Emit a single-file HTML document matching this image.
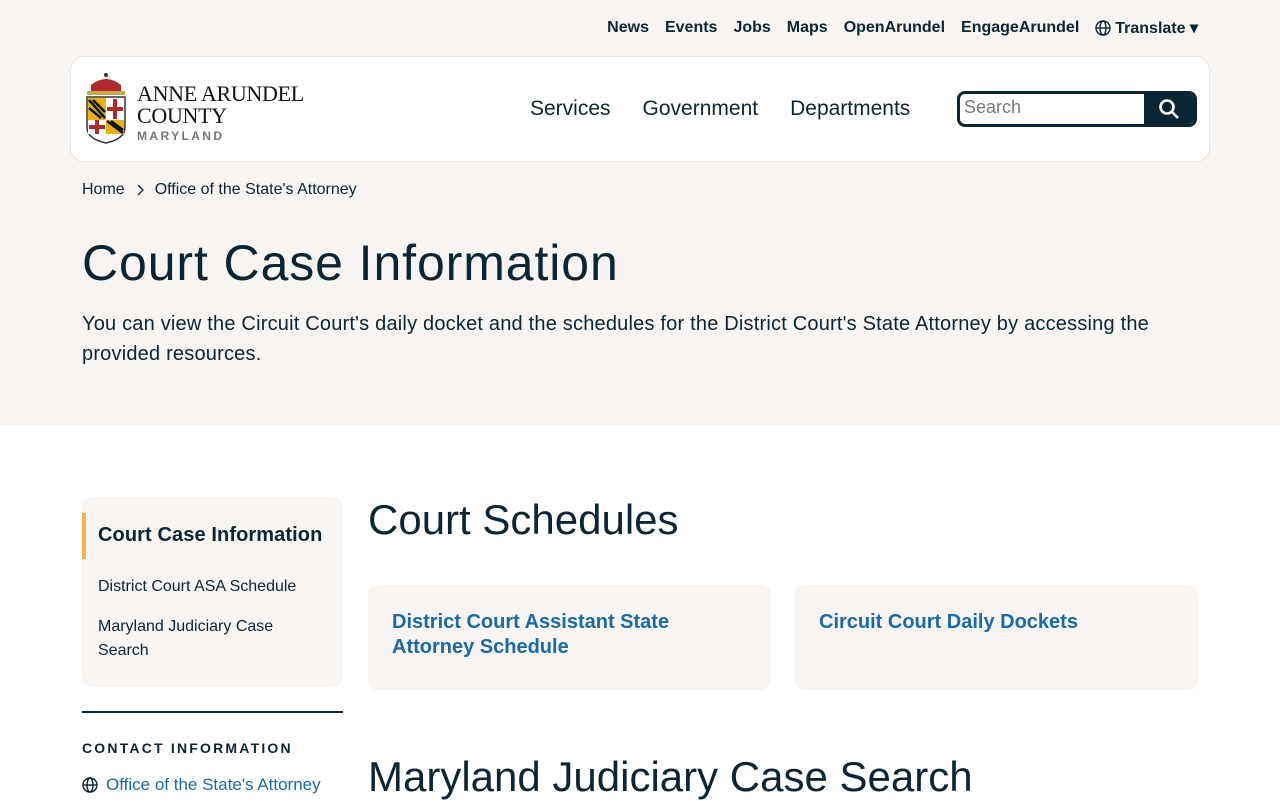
<!DOCTYPE html>
<html><head><meta charset="utf-8"><style>
*{box-sizing:border-box;margin:0;padding:0}
body{width:1280px;height:800px;overflow:hidden;font-family:"Liberation Sans",sans-serif;color:#0b2535;background:#fff}
.top{background:#f7f4f1;height:425px;position:relative}
.util{position:absolute;top:18px;right:82px;display:flex;gap:16px;font-size:16px;font-weight:600;letter-spacing:0}
.util span{display:flex;align-items:center;gap:4px}
.hdr{position:absolute;left:70px;top:56px;width:1140px;height:106px;background:#fff;border:1px solid #e8e4e0;border-radius:14px}
.logo{position:absolute;left:12px;top:14px;width:46px;height:76px}
.lt{position:absolute;left:66px;top:26px;font-family:"Liberation Serif",serif;font-size:22px;line-height:22px;color:#111;letter-spacing:-.3px}
.lt small{display:block;font-family:"Liberation Sans",sans-serif;font-size:12px;letter-spacing:2.4px;color:#777;font-weight:bold;line-height:16px;margin-top:1px}
.nav{position:absolute;left:459px;top:40px;display:flex;gap:32px;font-size:21px;font-weight:500}
.search{position:absolute;left:886px;top:34px;width:240px;height:36px;border:3px solid #0b2535;border-radius:8px;overflow:hidden;display:flex}
.search div{flex:1;color:#777;font-size:18px;padding:3px 4px}
.search b{width:50px;background:#0b2535;display:flex;align-items:center;justify-content:center}
.bc{position:absolute;left:82px;top:181px;font-size:16px;display:flex;gap:10px;align-items:center}
h1{position:absolute;left:82px;top:234px;font-size:50px;font-weight:500;letter-spacing:.9px}
.intro{position:absolute;left:82px;top:309px;width:1110px;font-size:20px;line-height:30px;letter-spacing:.2px}
.side{position:absolute;left:82px;top:497px;width:261px;height:190px;background:#f7f4f1;border-radius:10px}
.side .act{position:absolute;left:0;top:16px;height:46px;border-left:4px solid #f7b34a;padding:11px 0 0 12px;font-size:20px;font-weight:bold;letter-spacing:.1px}
.side p{position:absolute;left:16px;font-size:16px;line-height:24px}
.hr{position:absolute;left:82px;top:711px;width:261px;border-top:2px solid #0b2535}
.ci{position:absolute;left:82px;top:740px;font-size:14px;font-weight:bold;letter-spacing:2.2px}
.ol{position:absolute;left:82px;top:775px;font-size:17px;color:#1a69a8;display:flex;gap:8px;align-items:center}
h2{position:absolute;left:368px;font-size:42px;font-weight:500;letter-spacing:0}
.card{position:absolute;top:585px;width:403px;height:105px;background:#f7f4f1;border-radius:10px;padding:25px 24px;font-size:20px;font-weight:600;color:#1a69a8;line-height:25px}
</style></head><body>
<div class="top">
<div class="util"><span>News</span><span>Events</span><span>Jobs</span><span>Maps</span><span>OpenArundel</span><span>EngageArundel</span><span><svg width="16" height="16" viewBox="0 0 16 16" fill="none" stroke="#0b2535" stroke-width="1.4"><circle cx="8" cy="8" r="7"/><ellipse cx="8" cy="8" rx="3" ry="7"/><path d="M1 8h14"/></svg>Translate ▾</span></div>
<div class="hdr">
<svg class="logo" viewBox="0 0 46 76"><path d="M8 14q15-12 30 0v6H8z" fill="#b02a2a"/><circle cx="23" cy="4" r="2" fill="#333"/><rect x="4" y="20" width="38" height="4" fill="#c8a84b"/><path d="M4 26h38v30q0 12-19 16Q4 68 4 56z" fill="#fff" stroke="#333" stroke-width="1.5"/><rect x="5" y="27" width="18" height="22" fill="#e9b314"/><path d="M6 29l16 18M6 37l12 10M10 29l12 12" stroke="#111" stroke-width="2.5"/><rect x="23" y="27" width="18" height="22" fill="#fff"/><path d="M32 28v20M24 38h16" stroke="#b02a2a" stroke-width="4"/><rect x="5" y="49" width="18" height="14" fill="#fff"/><path d="M14 49v14M6 56h16" stroke="#b02a2a" stroke-width="4"/><rect x="23" y="49" width="18" height="14" fill="#e9b314"/><path d="M24 50l16 12M28 50l12 9" stroke="#111" stroke-width="2.5"/></svg>
<div class="lt">ANNE ARUNDEL<br>COUNTY<small>MARYLAND</small></div>
<div class="nav"><span>Services</span><span>Government</span><span>Departments</span></div>
<div class="search"><div>Search</div><b><svg width="22" height="22" viewBox="0 0 22 22" fill="none" stroke="#fff" stroke-width="2.6"><circle cx="9" cy="9" r="6.5"/><path d="M14 14l6 6"/></svg></b></div>
</div>
<div class="bc"><span>Home</span><svg width="10" height="12" viewBox="0 0 10 12" fill="none" stroke="#0b2535" stroke-width="1.3"><path d="M3 1l5 5-5 5"/></svg><span>Office of the State's Attorney</span></div>
<h1>Court Case Information</h1>
<div class="intro">You can view the Circuit Court's daily docket and the schedules for the District Court's State Attorney by accessing the provided resources.</div>
</div>
<div class="side"><div class="act">Court Case Information</div><p style="top:78px">District Court ASA Schedule</p><p style="top:118px">Maryland Judiciary Case<br>Search</p></div>
<div class="hr"></div>
<div class="ci">CONTACT INFORMATION</div>
<div class="ol"><svg width="16" height="16" viewBox="0 0 16 16" fill="none" stroke="#0b2535" stroke-width="1.4"><circle cx="8" cy="8" r="7"/><ellipse cx="8" cy="8" rx="3" ry="7"/><path d="M1 8h14"/></svg>Office of the State's Attorney</div>
<h2 style="top:496px">Court Schedules</h2>
<div class="card" style="left:368px">District Court Assistant State<br>Attorney Schedule</div>
<div class="card" style="left:795px">Circuit Court Daily Dockets</div>
<h2 style="top:753px">Maryland Judiciary Case Search</h2>
</body></html>
